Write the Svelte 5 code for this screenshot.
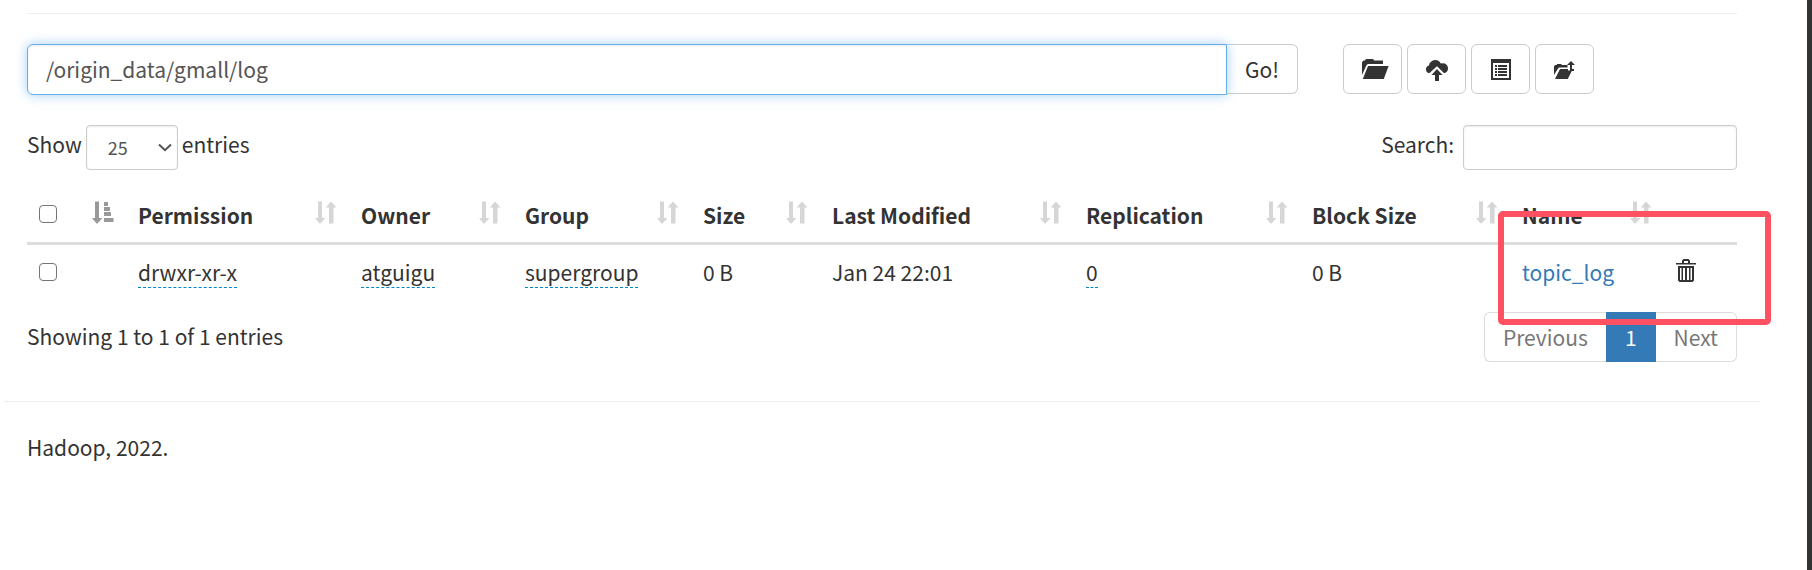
<script>
  let path = $state('/origin_data/gmall/log');
  let pageSize = $state('25');
  let query = $state('');

  const columns = [
    { label: '', width: 99, kind: 'select' },
    { label: 'Permission', width: 223 },
    { label: 'Owner', width: 164 },
    { label: 'Group', width: 178 },
    { label: 'Size', width: 129 },
    { label: 'Last Modified', width: 254 },
    { label: 'Replication', width: 226 },
    { label: 'Block Size', width: 210 },
    { label: 'Name', width: 154 },
    { label: '', width: 73, kind: 'action' }
  ];

  const files = [
    {
      permission: 'drwxr-xr-x',
      owner: 'atguigu',
      group: 'supergroup',
      size: '0 B',
      modified: 'Jan 24 22:01',
      replication: '0',
      block: '0 B',
      name: 'topic_log'
    }
  ];
</script>

<div class="page">
  <main class="container">
    <hr class="rule" />

    <div class="row">
      <form class="path-col" onsubmit={(e) => e.preventDefault()}>
        <input class="control path" type="text" aria-label="Directory" bind:value={path} />
        <button class="btn go" type="submit">Go!</button>
      </form>
      <div class="tools-col">
        <button class="btn tool folder" type="button" aria-label="Create directory">
          <svg width="27" height="20" viewBox="0 0 27 20">
            <path d="M0 16V3.2L1.5 1.5H3L4 0h7l1.2 1.5H21V5H6L4.6 6z" />
            <path d="M6 7h20.6L21.8 20H.8z" />
          </svg>
        </button>
        <button class="btn tool low" type="button" aria-label="Upload files">
          <svg width="22" height="21" viewBox="0 0 22 21">
            <path d="M3.2 13.3A4 4 0 0 1 0 9.5a4 4 0 0 1 3-4A5 5 0 0 1 5 1.8 6 6 0 0 1 9 0a6.200 6.200 0 0 1 5.800 3.600A5 5 0 0 1 17 3.200a5 5 0 0 1 5 5 5.200 5.200 0 0 1-3.800 5.100L11 6.300z" />
            <path d="M11 9l5.500 6H13v6H9v-6H5.500z" />
          </svg>
        </button>
        <button class="btn tool" type="button" aria-label="Cut and paste">
          <svg width="20" height="21" viewBox="0 0 20 21">
            <path fill-rule="evenodd" d="M0 0h20v21H0zM2 4v15h16V4z" />
            <path d="M4 6h2v2H4zM4 9h2v2H4zM4 12h2v2H4zM4 15h2v2H4zM7 6h9v2H7zM7 9h9v2H7zM7 12h9v2H7zM7 15h9v2H7z" />
          </svg>
        </button>
        <button class="btn tool low" type="button" aria-label="Parent directory">
          <svg width="21" height="18" viewBox="0 0 21 18">
            <path d="M0 14V5.500L1 4h1.500l.8-1H7l1 1h5.500v2.500H5L3.700 8z" />
            <path d="M6 8h8v1.500h4L13.800 18H1z" />
            <path d="M17 0l4 4h-3v4h2v2h-4V4h-3z" />
          </svg>
        </button>
      </div>
    </div>

    <div class="filters">
      <label class="field">
        <span>Show</span>
        <span class="select-wrap">
          <select class="control small" bind:value={pageSize}>
            <option>25</option>
            <option>50</option>
            <option>100</option>
          </select>
          <svg class="chevron" width="14" height="9" viewBox="0 0 14 9">
            <path d="M1 1.500L7 7.200l6-5.700" fill="none" stroke="#555" stroke-width="2" />
          </svg>
        </span>
        <span>entries</span>
      </label>
      <label class="field search">
        <span>Search:</span>
        <input class="control small" type="search" bind:value={query} />
      </label>
    </div>

    <div class="listing">
      <table>
        <colgroup>
          {#each columns as c}
            <col style="width: {c.width}px" />
          {/each}
        </colgroup>
        <thead>
          <tr>
            {#each columns as c}
              <th>
                <div class="head">
                  {#if c.kind === 'select'}
                    <input type="checkbox" aria-label="Select all" />
                    <svg class="sort active" width="22" height="23" viewBox="0 0 22 23">
                      <path d="M3 .5h4V17h3.500L5.500 22.500h-1L0 17h3zM12 1h4v4h-4zM12 6h6v4h-6zM12 11h7v4h-7zM12 17h9.500v4H12z" />
                    </svg>
                  {:else if c.label}
                    <span>{c.label}</span>
                    <svg class="sort" width="22" height="23" viewBox="0 0 22 23">
                      <path d="M3 .5h4V17h3.500L5.500 22.500h-1L0 17h3zM14 22.500V6.500h-3.300L15.500 1h1l5 5.500H18.500v16z" />
                    </svg>
                  {/if}
                </div>
              </th>
            {/each}
          </tr>
        </thead>
        <tbody>
          {#each files as f}
            <tr>
              <td><div class="head"><input type="checkbox" aria-label="Select {f.name}" /></div></td>
              <td><span class="editable">{f.permission}</span></td>
              <td><span class="editable">{f.owner}</span></td>
              <td><span class="editable">{f.group}</span></td>
              <td>{f.size}</td>
              <td>{f.modified}</td>
              <td><span class="editable">{f.replication}</span></td>
              <td>{f.block}</td>
              <td><a href="#{f.name}">{f.name}</a></td>
              <td>
                <button class="trash" type="button" aria-label="Delete {f.name}">
                  <svg width="20" height="23" viewBox="0 0 20 23">
                    <path fill-rule="evenodd" d="M6 4V1.500L7.500 0h5L14 1.500V4h6v1.500H0V4zM8 4h4V2H8z" />
                    <path fill-rule="evenodd" d="M2 7h16v14.500L16.500 23h-13L2 21.500zM4 9v12h1.500V9zM7 9v12h2V9zM11 9v12h2V9zM14.500 9v12H16V9z" />
                  </svg>
                </button>
              </td>
            </tr>
          {/each}
        </tbody>
      </table>
      <div class="highlight"></div>
    </div>

    <div class="foot">
      <div class="info">Showing 1 to 1 of 1 entries</div>
      <nav class="pager" aria-label="Pages">
        <button type="button">Previous</button>
        <button type="button" class="current">1</button>
        <button type="button">Next</button>
      </nav>
    </div>

    <hr class="rule wide" />
    <footer>Hadoop, 2022.</footer>
  </main>
</div>

<style>
  :global(body) {
    background: #fff;
  }

  .page,
  .page :global(*) {
    box-sizing: border-box;
  }

  .page {
    min-height: 100vh;
    padding: 13px 47px 0 4px;
    border-right: 5px solid #313333;
    color: #333;
    font: 21px/30px 'Noto Sans CJK SC', 'Source Sans Pro', sans-serif;
  }

  .container {
    padding: 0 23px;
  }

  .rule {
    height: 1px;
    margin: 0;
    border: 0;
    background: #eee;
  }

  .rule.wide {
    margin: 39px -23px 0;
  }

  .row {
    display: flex;
    align-items: flex-start;
    margin: 30px -23px 0;
  }

  .path-col {
    display: flex;
    align-items: flex-start;
    width: 75%;
    padding: 0 23px;
  }

  .tools-col {
    display: flex;
    gap: 5px;
    width: 25%;
    padding: 0 22px;
  }

  .control {
    min-width: 0;
    margin: 0;
    border: 1px solid #ccc;
    border-radius: 4px;
    background: #fff;
    box-shadow: inset 0 1px 2px rgba(0, 0, 0, 0.075);
    color: #555;
    font: inherit;
    outline: none;
    appearance: none;
  }

  .path {
    position: relative;
    flex: 1;
    height: 51px;
    padding: 8px 18px 10px;
    border-color: #66afe9;
    border-radius: 6px 0 0 6px;
    box-shadow: inset 0 1px 2px rgba(0, 0, 0, 0.075), 0 0 12px rgba(102, 175, 233, 0.6);
  }

  .btn {
    display: flex;
    align-items: center;
    justify-content: center;
    height: 50px;
    padding: 0 18px;
    border: 1px solid #ccc;
    border-radius: 6px;
    background: #fff;
    color: #333;
    font: inherit;
  }

  .go {
    border-left: 0;
    border-radius: 0 6px 6px 0;
  }

  .tool {
    width: 59px;
    padding: 0;
  }

  .tool.folder {
    padding-left: 5px;
  }

  .tool.low {
    padding-top: 2px;
  }

  svg {
    display: block;
    fill: currentColor;
    flex: none;
  }

  .filters {
    display: flex;
    justify-content: space-between;
    margin-top: 30px;
  }

  .field {
    display: flex;
    align-items: center;
    gap: 4px;
  }

  .field > span:not(.select-wrap) {
    padding-bottom: 8px;
  }

  .search {
    gap: 9px;
  }

  .small {
    height: 45px;
    font-size: 18px;
  }

  .search .small {
    width: 274px;
    padding: 0 15px;
  }

  .select-wrap {
    position: relative;
  }

  select.small {
    display: block;
    width: 92px;
    padding: 0 21px 2px;
  }

  .chevron {
    position: absolute;
    top: 18px;
    right: 6px;
    pointer-events: none;
  }

  .listing {
    position: relative;
    margin-top: 18px;
  }

  table {
    width: 100%;
    border-collapse: separate;
    border-spacing: 0;
    table-layout: fixed;
  }

  th,
  td {
    padding: 12px;
    text-align: left;
    vertical-align: top;
    white-space: nowrap;
  }

  th {
    border-bottom: 3px solid #ddd;
  }

  td {
    height: 54px;
  }

  .head {
    display: flex;
    justify-content: space-between;
    height: 30px;
  }

  .sort {
    margin-top: 1px;
    color: #d6d6d6;
  }

  .sort.active {
    color: #999;
  }

  input[type='checkbox'] {
    width: 18px;
    height: 18px;
    margin: 5px 0 0;
    border: 1px solid #767676;
    border-radius: 4px;
    background: #fff;
    appearance: none;
  }

  td input[type='checkbox'] {
    margin-top: 6px;
  }

  input[type='checkbox']:checked {
    background: #337ab7;
  }

  .editable {
    display: inline-block;
    border-bottom: 1px dashed #08c;
  }

  a {
    color: #337ab7;
    text-decoration: none;
  }

  .trash {
    display: block;
    margin: 2px 0 0;
    padding: 0;
    border: 0;
    background: none;
    color: #333;
  }

  .highlight {
    position: absolute;
    top: 23px;
    right: -34px;
    width: 273px;
    height: 114px;
    border: 6px solid #ff5162;
    border-radius: 5px;
    pointer-events: none;
  }

  .foot {
    display: flex;
    justify-content: space-between;
    align-items: flex-start;
    margin-top: 12px;
  }

  .info {
    padding-top: 9px;
  }

  .pager {
    display: flex;
  }

  .pager button {
    height: 50px;
    padding: 0 18px;
    border: 1px solid #ddd;
    background: #fff;
    color: #777;
    font: inherit;
  }

  .pager button:first-child {
    border-right: 0;
    border-radius: 6px 0 0 6px;
  }

  .pager button:last-child {
    border-left: 0;
    border-radius: 0 6px 6px 0;
  }

  .pager .current {
    border-color: #337ab7;
    background: #337ab7;
    color: #fff;
  }

  footer {
    padding: 30px 0;
  }
</style>
